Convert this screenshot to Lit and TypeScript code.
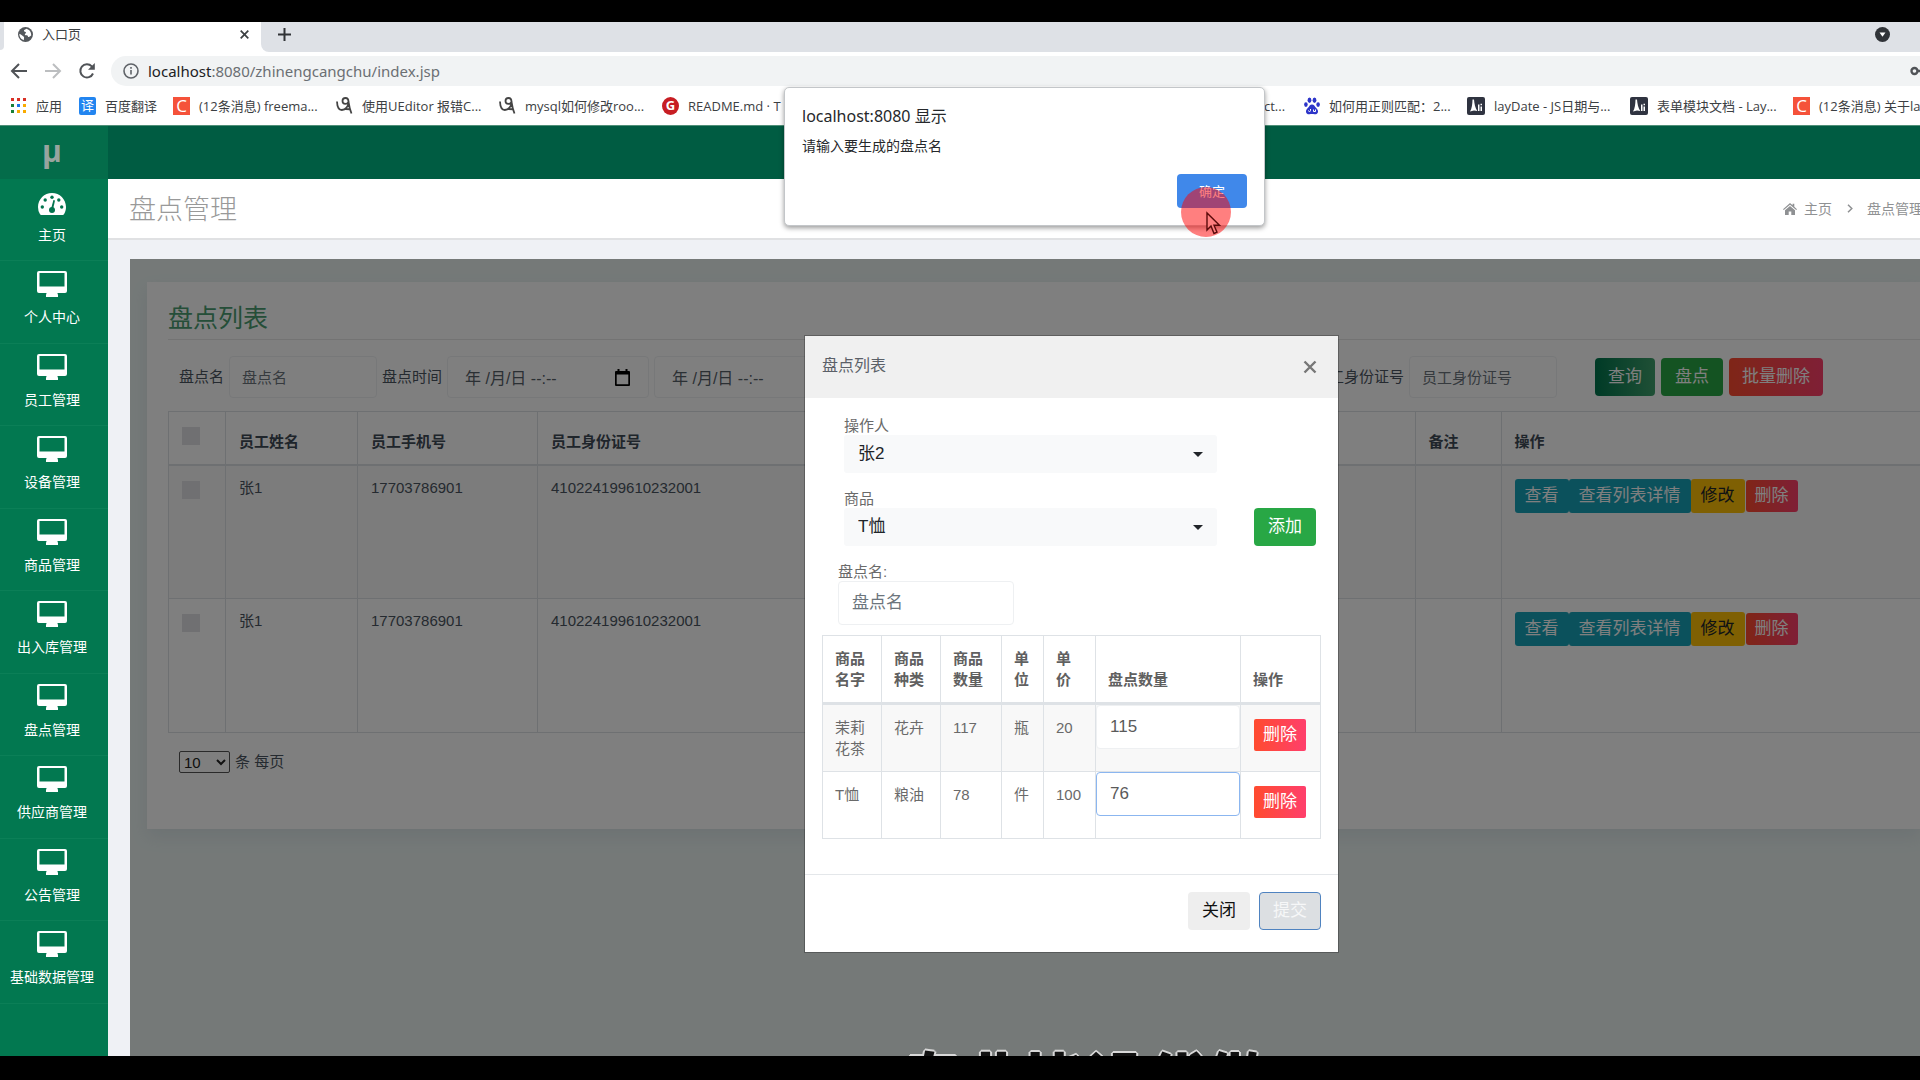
import { LitElement, html, css, svg, TemplateResult } from "lit";
import { customElement } from "lit/decorators.js";

const monitorIcon = html`<svg class="ico" width="30" height="26" viewBox="0 0 30 26" aria-hidden="true">
  <path fill="#fff" fill-rule="evenodd" d="M2 0h26a2 2 0 0 1 2 2v18a2 2 0 0 1-2 2h-7.600l.6 2v2h-12v-2l.6-2H2a2 2 0 0 1-2-2V2a2 2 0 0 1 2-2zM2.500 2v13.500h25V2z"/>
</svg>`;

const gaugeIcon = html`<svg class="ico" width="30" height="26" viewBox="0 0 30 26" aria-hidden="true">
  <path fill="#fff" d="M15 4c7.700 0 14 6.200 14 14 0 2.600-.7 5-1.900 7.100-.3.500-.8.900-1.400.9H4.300c-.6 0-1.100-.4-1.400-.9A14 14 0 0 1 1 18C1 10.200 7.300 4 15 4z"/>
  <g fill="#02744e">
    <circle cx="15" cy="8.200" r="1.700"/><circle cx="8.200" cy="11" r="1.700"/><circle cx="21.800" cy="11" r="1.700"/>
    <circle cx="5.300" cy="18" r="1.700"/><circle cx="24.700" cy="18" r="1.700"/><circle cx="15" cy="21" r="3"/>
    <path d="M14 20l2.400-9 1.600.4-2 9z"/>
  </g>
</svg>`;

const swirlIcon = html`<svg width="17" height="18" viewBox="0 0 17 18" fill="none" stroke="#444" stroke-width="1.800" aria-hidden="true">
  <path d="M1 4.500c.2 5 1.800 8.500 4.800 8.500 3.700 0 6.700-3.500 6.700-8C12.500 2.300 11.500 1 9.500 1 7.500 1 6.500 2.500 6.500 4c0 1.700 1 2.800 2.800 2.800 1.600 0 2.600-.8 3.200-2M12.500 5c.6 4 1.500 8 3 11.500M9.500 12l5 .3"/>
</svg>`;

const layIcon = html`<svg width="18" height="18" viewBox="0 0 18 18" aria-hidden="true">
  <rect width="18" height="18" rx="2" fill="#2f3340"/>
  <path fill="#fff" d="M5.500 2.500h1.500c.3 4 1.200 8.500 3.300 11.500L7 13.600 3 14.500C4.800 12 5.400 7 5.500 2.500z"/>
  <path fill="#fff" d="M11 7.500h1.500V14H11zM13.500 9.500H15V14h-1.500zM13.500 6.800H15v1.500h-1.500z"/>
</svg>`;

const pawIcon = html`<svg width="16" height="18" viewBox="0 0 16 18" fill="#2d35c9" aria-hidden="true">
  <ellipse cx="5.500" cy="3.300" rx="1.900" ry="2.700"/><ellipse cx="10.500" cy="3.300" rx="1.900" ry="2.700"/>
  <ellipse cx="1.900" cy="7.600" rx="1.800" ry="2.300"/><ellipse cx="14.100" cy="7.600" rx="1.800" ry="2.300"/>
  <path d="M8 7.500c2 0 2.700 1.900 4 3.300 1.300 1.300 2.200 2.400 2 4.200-.3 2-2 2.500-3.500 2.300-1.700-.3-3.300-.3-5 0-1.500.2-3.200-.3-3.500-2.300-.2-1.800.7-2.900 2-4.200C5.300 9.400 6 7.500 8 7.500z"/>
  <path d="M4.500 13.500a1 1 0 1 0 2 0V12M9.500 12.500v2h2v-2" fill="none" stroke="#fff" stroke-width="1"/>
</svg>`;

const caret = html`<svg class="caret" width="10" height="5" viewBox="0 0 10 5" aria-hidden="true"><path d="M0 0h10L5 5z" fill="#212529"/></svg>`;

@customElement("browser-chrome")
export class BrowserChrome extends LitElement {
  static styles = css`
    :host { display: block; font: 13px/20px "Open Sans", "Noto Sans", "Noto Sans CJK SC", sans-serif; color: #3c4043; }
    button { border: 0; padding: 0; background: none; display: flex; color: inherit; }
    .tabs { display: flex; height: 30px; background: #dee1e6; }
    .edge { width: 5px; background: #fff; }
    .edge i { display: block; height: 28px; width: 4px; background: #dee1e6; border-bottom-right-radius: 6px; }
    .tab { display: flex; align-items: center; box-sizing: border-box; width: 256px; background: #fff; padding: 0 12px 6px 13px; gap: 9px; }
    .tab .close { margin-left: auto; }
    .corner { flex: 1; background: #fff; }
    .corner > div { height: 30px; box-sizing: border-box; display: flex; align-items: center; justify-content: space-between; padding: 0 30px 6px 17px; background: #dee1e6; border-bottom-left-radius: 8px; }
    .bar { display: flex; align-items: center; height: 38px; background: #fff; padding-left: 10px; }
    .nav { display: flex; gap: 16px; width: 101px; }
    .omni { flex: 1; display: flex; align-items: center; gap: 9px; height: 30px; background: #f1f3f4; border-radius: 15px 0 0 15px; padding-left: 12px; overflow: hidden; font-family: "Noto Sans", sans-serif; font-size: 15px; }
    .omni a { flex: 1; color: #6b6f73; text-decoration: none; }
    .omni b { font-weight: 400; color: #202124; }
    .marks { display: flex; align-items: center; box-sizing: border-box; height: 35px; background: #fff; overflow: hidden; padding: 0 0 4px 11px; white-space: nowrap; }
    .marks a { display: flex; align-items: center; gap: 9px; color: inherit; text-decoration: none; flex: none; }
    .marks a.app { width: 68px; gap: 10px; }
    .marks a.fy { width: 94px; }
    .marks a.std { width: 163px; }
    .spacer { flex: 1; }
    .badge { width: 17px; height: 18px; display: grid; place-items: center; color: #fff; font-size: 13px; line-height: 17px; background: #f5523a; }
    .badge.c { font-size: 17px; }
    .badge.blue { background: #2285f0; border-radius: 2px; }
    .badge.red { background: #c71d23; border-radius: 50%; font-weight: 700; }
    .late { display: flex; width: 656px; flex: none; }
    .late a.first { width: 40px; }
  `;
  render() {
    const dots = ["#d93025", "#d93025", "#d93025", "#188038", "#1a73e8", "#f9ab00", "#188038", "#f9ab00", "#f9ab00"];
    return html`
      <div class="tabs">
        <div class="edge"><i></i></div>
        <div class="tab">
          <svg width="15" height="15" viewBox="0 0 15 15" aria-hidden="true"><circle cx="7.500" cy="7.500" r="7.500" fill="#54585c"/><path fill="#fff" d="M8.500 1.800c-1 .8-3 1-2.500 2.500.3.900 1.700.3 2 1.200.2.900-1.300 1-1.200 2 .1.900 1.500.7 2.500.9.900.2.500 1.600 1.300 1.700.9 0 1.600-1 2.600-1.500.3-3.400-1.800-6-4.700-6.800zM1.400 6.700c1 .4 2 .8 2.800 1.700.9.900 2 1 1.900 2.100 0 1-.4 1.700-.2 2.700-2.600-.8-4.700-3.300-4.500-6.500z"/></svg>
          <span>入口页</span>
          <button class="close" aria-label="关闭标签页"><svg width="9" height="9" viewBox="0 0 9 9" stroke="#3c4043" stroke-width="1.700"><path d="M.7.7l7.600 7.600M8.300.7L.7 8.300"/></svg></button>
        </div>
        <div class="corner"><div>
          <button aria-label="新标签页"><svg width="13" height="13" viewBox="0 0 13 13" stroke="#303336" stroke-width="2"><path d="M6.500 0v13M0 6.500h13"/></svg></button>
          <button aria-label="搜索标签页"><svg width="15" height="15" viewBox="0 0 15 15"><circle cx="7.500" cy="7.500" r="7.500" fill="#303338"/><path fill="#fff" d="M4.500 5.500h6l-3 4.200z"/></svg></button>
        </div></div>
      </div>
      <div class="bar">
        <div class="nav">
          <button aria-label="后退"><svg width="18" height="18" viewBox="0 0 18 18" fill="none" stroke="#505357" stroke-width="2"><path d="M17 9H2.500M9 2L2 9l7 7"/></svg></button>
          <button aria-label="前进"><svg width="18" height="18" viewBox="0 0 18 18" fill="none" stroke="#bcbec0" stroke-width="2"><path d="M1 9h14.500M9 2l7 7-7 7"/></svg></button>
          <button aria-label="重新加载"><svg width="18" height="18" viewBox="0 0 18 18" fill="none" stroke="#505357" stroke-width="2"><path d="M15 11.500A6.600 6.600 0 1 1 13.800 4.400L15.500 6"/><path d="M16.800 1v6.800H10z" fill="#505357" stroke="none"/></svg></button>
        </div>
        <div class="omni">
          <svg width="16" height="16" viewBox="0 0 16 16" fill="none" stroke="#5f6368" stroke-width="1.600" aria-hidden="true"><circle cx="8" cy="8" r="7"/><path d="M8 7v4.500M8 4v1.800"/></svg>
          <a href="#"><b>localhost</b>:8080/zhinengcangchu/index.jsp</a>
          <svg width="10" height="10" viewBox="0 0 10 10" fill="none" stroke="#505357" stroke-width="2.400" aria-hidden="true"><circle cx="4.500" cy="5" r="3"/><path d="M7.500 5H10"/></svg>
        </div>
      </div>
      <div class="marks">
        <a class="app" href="#"><svg width="15" height="15" viewBox="0 0 15 15" aria-hidden="true">${dots.map((c, i) => svg`<rect x=${(i % 3) * 6} y=${Math.floor(i / 3) * 6} width="3" height="3" fill=${c}/>`)}</svg>应用</a>
        <a class="fy" href="#"><span class="badge blue">译</span>百度翻译</a>
        <a class="std" href="#"><span class="badge c">C</span>(12条消息) freema...</a>
        <a class="std" href="#">${swirlIcon}使用UEditor 报错C...</a>
        <a class="std" href="#">${swirlIcon}mysql如何修改roo...</a>
        <a href="#"><span class="badge red">G</span>README.md · T</a>
        <span class="spacer"></span>
        <div class="late">
          <a class="first" href="#">ct...</a>
          <a class="std" href="#">${pawIcon}如何用正则匹配：2...</a>
          <a class="std" href="#">${layIcon}layDate - JS日期与...</a>
          <a class="std" href="#">${layIcon}表单模块文档 - Lay...</a>
          <a class="std" href="#"><span class="badge c">C</span>(12条消息) 关于la</a>
        </div>
      </div>`;
  }
}

@customElement("side-menu")
export class SideMenu extends LitElement {
  static styles = css`
    :host { display: block; width: 108px; flex: none; background: #027850; color: #fff; font: 14px/20px "Liberation Sans", "Noto Sans CJK SC", sans-serif; }
    .logo { height: 53px; display: grid; place-items: center; background: #046c4a; color: #98a49f; font: 700 30px/50px "Open Sans", sans-serif; padding: 0 4px 3px 0; box-sizing: border-box; }
    ul { list-style: none; margin: 0; padding: 0; }
    li { height: 82px; box-sizing: border-box; border-bottom: 1px solid #0b7f57; }
    li:nth-child(even) { height: 83px; }
    a { display: flex; flex-direction: column; align-items: center; gap: 10px; padding: 10px 4px 0 0; color: inherit; text-decoration: none; white-space: nowrap; }
    .ico { display: block; }
  `;
  render() {
    const items = ["主页", "个人中心", "员工管理", "设备管理", "商品管理", "出入库管理", "盘点管理", "供应商管理", "公告管理", "基础数据管理"];
    return html`<div class="logo">μ</div>
      <nav><ul>${items.map((t, i) => html`<li><a href="#">${i ? monitorIcon : gaugeIcon}<span>${t}</span></a></li>`)}</ul></nav>`;
  }
}

@customElement("stock-list")
export class StockList extends LitElement {
  static styles = css`
    :host { display: block; background: #fff; box-shadow: 0 8px 16px rgba(120, 140, 170, 0.14); padding: 19px 0 56px 21px; font: 15px/20px "Liberation Sans", "Noto Sans CJK SC", sans-serif; color: #4a5460; }
    h2 { margin: 0; padding: 0 0 4px; font-size: 25px; line-height: 34px; font-weight: 400; color: #4a9d70; border-bottom: 1px solid #e6e6e6; }
    form { display: flex; align-items: center; gap: 5px; padding: 16px 97px 13px 11px; white-space: nowrap; margin: 0; }
    input[type="text"] { box-sizing: border-box; height: 42px; border: 1px solid #eef1f3; border-radius: 4px; background: none; padding: 0 12px; font: inherit; color: #566069; }
    input::placeholder { color: #6c757d; opacity: 1; }
    .name { width: 148px; }
    .idno { width: 148px; }
    .date { display: flex; align-items: center; box-sizing: border-box; width: 202px; height: 42px; border: 1px solid #eef1f3; border-radius: 4px; padding-right: 18px; }
    .date input[type="text"] { border: 0; flex: 1; min-width: 0; padding: 0 0 0 17px; height: 40px; font-size: 16px; }
    .date button { display: flex; background: none; padding: 0; border: 0; }
    .grow { flex: 1; }
    .tools { display: flex; align-items: center; gap: 6px; padding-left: 33px; }
    button { font: inherit; border: 0; color: #fff; }
    .btn { font-size: 17px; line-height: 24px; height: 38px; border-radius: 4px; padding: 0 13px; }
    .query { background: linear-gradient(90deg, #00754d, #3fa06c); }
    .count { background: #28a745; padding: 0 14px; }
    .danger { background: linear-gradient(90deg, #ff4b2f, #ff3f6c); }
    table { border-collapse: collapse; width: 100%; table-layout: fixed; }
    th, td { border: 1px solid #dde1e5; padding: 12px 13px; text-align: left; vertical-align: top; }
    th { height: 53px; box-sizing: border-box; vertical-align: bottom; border-bottom: 2px solid #dde1e5; color: #3f4a56; }
    td { height: 134px; box-sizing: border-box; }
    tr > :last-child { border-right: 0; }
    tbody tr:nth-child(odd) { background: #f8f8f8; }
    .c0 { width: 57px; } .c1 { width: 132px; } .c2 { width: 180px; } .c4 { width: 86px; } .c5 { width: 419px; }
    input[type="checkbox"] { appearance: none; display: block; width: 18px; height: 18px; margin: 3px 0 0; background: #e0e0e5; }
    th input[type="checkbox"] { margin: 0 0 7px; }
    .acts { display: flex; align-items: center; padding-top: 1px; }
    .acts button { font-size: 17px; line-height: 24px; height: 34px; padding: 0 10px; border-radius: 3px; white-space: nowrap; }
    .acts .info { background: #17a2b8; }
    .acts .warn { background: #ffc107; color: #212529; }
    .acts .danger { height: 32px; padding: 0 9px; margin-left: 1px; }
    .pages { display: flex; align-items: center; gap: 5px; padding: 18px 0 0 11px; }
    .pages select { width: 51px; height: 22px; font: inherit; border: 1px solid #555; border-radius: 2px; background: #fff; color: #222; padding: 0; }
  `;
  dateField(label: string) {
    return html`<div class="date"><input type="text" aria-label=${label} value="年 /月/日 --:--">
      <button type="button" aria-label="选择日期"><svg width="15" height="17" viewBox="0 0 15 17"><path fill="#000" fill-rule="evenodd" d="M2.500 0h2v2h6V0h2v2H14a1 1 0 0 1 1 1v13a1 1 0 0 1-1 1H1a1 1 0 0 1-1-1V3a1 1 0 0 1 1-1h1.500zM1.700 5.500v9.800h11.600V5.500z"/></svg></button></div>`;
  }
  render() {
    return html`
      <h2>盘点列表</h2>
      <form>
        <label for="n">盘点名</label><input id="n" class="name" type="text" placeholder="盘点名">
        <span>盘点时间</span>${this.dateField("开始时间")}${this.dateField("结束时间")}
        <span class="grow"></span>
        <label for="i">员工身份证号</label><input id="i" class="idno" type="text" placeholder="员工身份证号">
        <div class="tools">
          <button type="button" class="btn query">查询</button>
          <button type="button" class="btn count">盘点</button>
          <button type="button" class="btn danger">批量删除</button>
        </div>
      </form>
      <table>
        <colgroup><col class="c0"><col class="c1"><col class="c2"><col><col class="c4"><col class="c5"></colgroup>
        <thead><tr><th><input type="checkbox" aria-label="全选"></th><th>员工姓名</th><th>员工手机号</th><th>员工身份证号</th><th>备注</th><th>操作</th></tr></thead>
        <tbody>${[1, 2].map(() => html`<tr>
          <td><input type="checkbox" aria-label="选择"></td><td>张1</td><td>17703786901</td><td>410224199610232001</td><td></td>
          <td><div class="acts"><button class="info">查看</button><button class="info">查看列表详情</button><button class="warn">修改</button><button class="danger">删除</button></div></td>
        </tr>`)}</tbody>
      </table>
      <div class="pages"><select id="p" aria-label="每页条数"><option>10</option></select><label for="p">条 每页</label></div>`;
  }
}

@customElement("stock-dialog")
export class StockDialog extends LitElement {
  static styles = css`
    :host { display: block; width: 533px; background: #fff; box-shadow: 0 0 0 1px rgba(0, 0, 0, 0.25); font: 15px/20px "Liberation Sans", "Noto Sans CJK SC", sans-serif; color: #6a6a6a; }
    header { display: flex; justify-content: space-between; align-items: center; height: 62px; box-sizing: border-box; background: #f0f0f0; padding: 0 21px 0 17px; }
    h3 { margin: 0 0 2px; font-size: 16px; line-height: 24px; font-weight: 400; color: #5b6068; }
    button { font: inherit; border: 0; padding: 0; }
    .x { display: flex; background: none; }
    .body { padding: 18px 17px 35px; }
    .row { display: flex; align-items: flex-end; gap: 37px; padding-left: 22px; margin-bottom: 16px; }
    .field { display: flex; flex-direction: column; }
    .field label { line-height: 19px; }
    .name { padding-left: 16px; margin-bottom: 10px; align-items: flex-start; }
    .pick { display: grid; align-items: center; width: 373px; }
    .pick > * { grid-area: 1 / 1; }
    .pick select { appearance: none; height: 38px; border: 0; border-radius: 3px; background: #f8f9fa; padding: 0 14px; font: inherit; font-size: 17px; color: #212529; }
    .caret { justify-self: end; margin-right: 14px; pointer-events: none; }
    input { box-sizing: border-box; height: 44px; border: 1px solid #eef0f2; border-radius: 4px; padding: 0 13px; font: inherit; font-size: 17px; color: #5a5a5a; background: #fff; }
    input::placeholder { color: #6c757d; opacity: 1; }
    .name input { width: 176px; }
    .btn { font-size: 17px; line-height: 24px; height: 38px; width: 62px; border-radius: 4px; color: #fff; background: #28a745; }
    table { border-collapse: collapse; table-layout: fixed; width: 100%; line-height: 21px; }
    th, td { border: 1px solid #dee2e6; padding: 12px; text-align: left; vertical-align: top; overflow-wrap: anywhere; }
    th { height: 67px; box-sizing: border-box; vertical-align: bottom; border-bottom-width: 3px; color: #606060; }
    td { height: 67px; box-sizing: border-box; }
    tbody tr:nth-child(odd) { background: #f8f8f8; }
    td.qty { padding: 0; }
    td.op { padding-left: 13px; }
    .qty input { display: block; width: 100%; }
    .qty input.on { border-color: #8bb6f0; }
    .del { height: 32px; width: 52px; font-size: 17px; line-height: 24px; border-radius: 2px; color: #fff; background: linear-gradient(90deg, #ff4b2f, #ff3f6c); margin-top: 2px; }
    .a { width: 59px; } .b { width: 61px; } .c { width: 42px; } .d { width: 52px; } .e { width: 145px; }
    footer { display: flex; justify-content: flex-end; gap: 9px; border-top: 1px solid #e4e7ea; padding: 17px 17px 22px; }
    .btn.close { background: #eee; color: #111; }
    .btn.submit { background: #dcdfe2; border: 1px solid #4f83c0; color: #f6f7f8; }
  `;
  render() {
    const rows = [["茉莉花茶", "花卉", "117", "瓶", "20", "115"], ["T恤", "粮油", "78", "件", "100", "76"]];
    const heads = ["商品名字", "商品种类", "商品数量", "单位", "单价", "盘点数量", "操作"];
    const cols = ["a", "a", "b", "c", "d", "e", ""];
    return html`
      <header><h3>盘点列表</h3><button class="x" aria-label="关闭"><svg width="14" height="14" viewBox="0 0 14 14" stroke="#777" stroke-width="2.400"><path d="M1.500 1.500l11 11M12.500 1.500l-11 11"/></svg></button></header>
      <div class="body">
        <div class="row"><div class="field"><label for="op">操作人</label><div class="pick"><select id="op"><option>张2</option></select>${caret}</div></div></div>
        <div class="row"><div class="field"><label for="g">商品</label><div class="pick"><select id="g"><option>T恤</option></select>${caret}</div></div><button class="btn">添加</button></div>
        <div class="field name"><label for="nm">盘点名:</label><input id="nm" type="text" placeholder="盘点名"></div>
        <table>
          <colgroup>${cols.map((c) => html`<col class=${c}>`)}</colgroup>
          <thead><tr>${heads.map((h) => html`<th>${h}</th>`)}</tr></thead>
          <tbody>${rows.map((r, i) => html`<tr>${r.slice(0, 5).map((v) => html`<td>${v}</td>`)}
            <td class="qty"><input class=${i ? "on" : ""} type="text" aria-label="盘点数量" .value=${r[5]}></td>
            <td class="op"><button class="del">删除</button></td></tr>`)}</tbody>
        </table>
      </div>
      <footer><button class="btn close">关闭</button><button class="btn submit">提交</button></footer>`;
  }
}

@customElement("alert-box")
export class AlertBox extends LitElement {
  static styles = css`
    :host { display: flex; flex-direction: column; box-sizing: border-box; width: 481px; padding: 17px; background: #fff; border: 1px solid #c3c6c9; border-radius: 5px; box-shadow: 0 2px 5px rgba(0, 0, 0, 0.4); font: 14px/20px "Noto Sans", "Noto Sans CJK SC", sans-serif; color: #26282b; }
    .t { font-size: 16px; line-height: 22px; }
    p { margin: 9px 0 18px; }
    button { align-self: flex-end; width: 70px; height: 34px; border: 0; border-radius: 4px; background: #4088ea; color: #fff; font: inherit; font-size: 13px; }
  `;
  render() {
    return html`<span class="t">localhost:8080 显示</span><p>请输入要生成的盘点名</p><button>确定</button>`;
  }
}

@customElement("app-root")
export class AppRoot extends LitElement {
  static styles = css`
    :host { display: block; box-sizing: border-box; min-height: 100vh; padding: 22px 0 24px; background: #000; font: 14px/20px "Liberation Sans", "Noto Sans CJK SC", sans-serif; }
    .screen { position: relative; display: flex; flex-direction: column; min-height: calc(100vh - 46px); background: #eff1f5; overflow: hidden; }
    .page { flex: 1; display: flex; border-top: 1px solid #4f8f78; }
    .main { flex: 1; min-width: 0; display: flex; flex-direction: column; }
    .top { height: 53px; background: #005c42; }
    .title { display: flex; align-items: center; justify-content: space-between; height: 59px; background: #fff; padding-left: 21px; border-bottom: 2px solid #e0e1e3; overflow: hidden; white-space: nowrap; color: #8f9193; }
    h1 { margin: 2px 0 0; font-size: 27px; line-height: 40px; font-weight: 300; color: #999; }
    .crumbs { display: flex; align-items: center; gap: 7px; width: 137px; }
    .crumbs a { color: inherit; text-decoration: none; }
    .crumbs svg { flex: none; }
    .crumbs .chev { margin: 0 7px 0 8px; }
    .work { position: relative; flex: 1; margin: 19px 0 0 22px; background: #eaf3f1; padding: 23px 0 0 17px; overflow: hidden; }
    .shade { position: absolute; inset: 0; background: rgba(0, 0, 0, 0.5); }
    stock-dialog { position: absolute; left: 675px; top: 77px; }
    .caption { position: absolute; left: 772px; bottom: -52px; font: 900 61px/61px "Noto Sans CJK SC", sans-serif; color: #111; text-shadow: -1px -1px 0 #d8d8d8, 1px -1px 0 #d8d8d8, 0 -2px 0 #d8d8d8, -2px 0 0 #d8d8d8, 2px 0 0 #d8d8d8, 0 2px 0 #d8d8d8; white-space: nowrap; }
    alert-box { position: absolute; left: 784px; top: 65px; }
    .spot { position: absolute; left: 1181px; top: 165px; pointer-events: none; }
  `;
  render(): TemplateResult {
    return html`<div class="screen">
      <browser-chrome></browser-chrome>
      <div class="page">
        <side-menu></side-menu>
        <div class="main">
          <div class="top"></div>
          <div class="title"><h1>盘点管理</h1>
            <div class="crumbs">
              <svg width="14" height="12" viewBox="0 0 14 12" fill="#8f9193" aria-hidden="true"><path d="M7 0l2.600 2.300V.8h1.700V3.800L14 6.200l-.8.900L7 1.700.8 7.100 0 6.200z"/><path d="M7 2.900l5 4.300V12H8.300V8.500H5.700V12H2V7.200z"/></svg>
              <a href="#">主页</a>
              <svg class="chev" width="6" height="9" viewBox="0 0 6 9" fill="none" stroke="#8f9193" stroke-width="1.500" aria-hidden="true"><path d="M1 .7l3.800 3.800L1 8.300"/></svg>
              <a href="#">盘点管理</a>
            </div>
          </div>
          <div class="work">
            <stock-list></stock-list>
            <div class="shade"></div>
            <stock-dialog></stock-dialog>
            <div class="caption">专业毕设代做</div>
          </div>
        </div>
      </div>
      <alert-box></alert-box>
      <svg class="spot" width="50" height="50" viewBox="0 0 50 50" aria-hidden="true">
        <circle cx="25" cy="25" r="25" fill="#ff0000" fill-opacity="0.5"/>
        <path d="M26 26v17l4-4 3 7.500 3-1.300-3-7h5.500z" fill="#ff7f7f" stroke="#5a0a0a" stroke-width="1.400"/>
      </svg>
    </div>`;
  }
}
